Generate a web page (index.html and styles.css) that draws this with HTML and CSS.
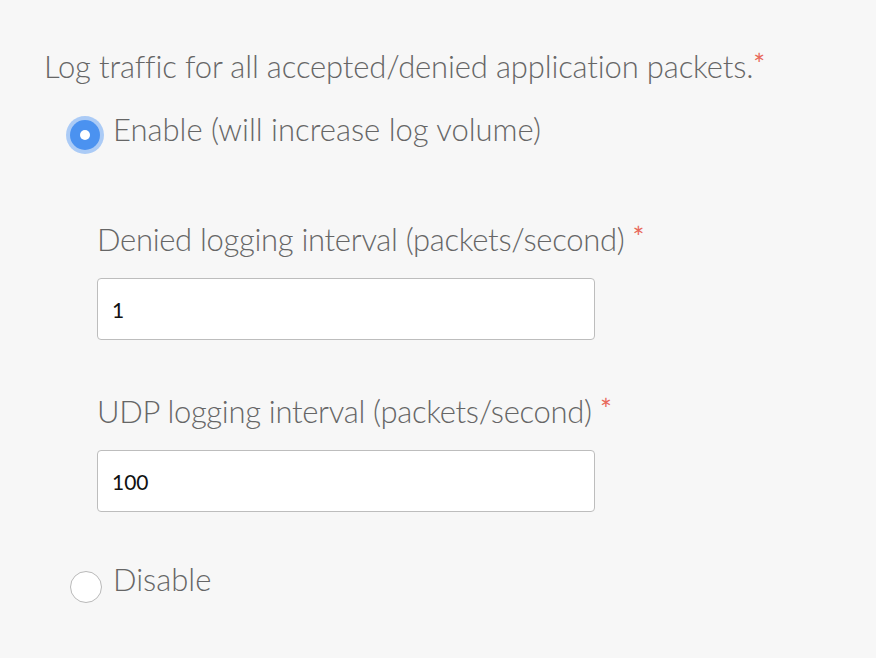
FILE: index.html
```html
<!DOCTYPE html>
<html>
<head>
<meta charset="utf-8">
<link rel="stylesheet" href="styles.css">
</head>
<body>
<div class="form">
  <div class="question">Log traffic for all accepted/denied application packets.<span class="req">*</span></div>
  <label class="option option-enable">
    <span class="radio checked"><span class="dot"></span></span>
    <span class="option-text">Enable (will increase log volume)</span>
  </label>
  <div class="sub">
    <div class="field">
      <div class="field-label">Denied logging interval (packets/second) <span class="req">*</span></div>
      <div class="input">1</div>
    </div>
    <div class="field">
      <div class="field-label">UDP logging interval (packets/second) <span class="req">*</span></div>
      <div class="input">100</div>
    </div>
  </div>
  <label class="option option-disable">
    <span class="radio"></span>
    <span class="option-text">Disable</span>
  </label>
</div>
</body>
</html>
```

FILE: styles.css
```css
html, body {
  margin: 0;
  padding: 0;
  background: #f7f7f7;
  width: 876px;
  height: 658px;
  overflow: hidden;
}
.form {
  font-family: "Lato", "Open Sans", sans-serif;
  font-weight: 300;
  color: #666;
  padding: 46px 0 0 44px;
  display: flex;
  flex-direction: column;
}
.question {
  font-size: 31px;
  line-height: 40px;
  letter-spacing: -0.15px;
}
.req {
  color: #e8685a;
  font-size: 28px;
  font-weight: 400;
  position: relative;
  top: -3px;
}
.option {
  display: flex;
  align-items: flex-start;
  gap: 12px;
  margin-left: 25px;
}
.option-enable {
  margin-top: 22px;
}
.option-text {
  font-size: 31px;
  line-height: 40px;
  letter-spacing: 0;
}
.radio {
  width: 32px;
  height: 32px;
  border-radius: 50%;
  box-sizing: border-box;
  border: 1px solid #b9b9b9;
  background: #fff;
  display: flex;
  align-items: center;
  justify-content: center;
  margin-top: 12px;
  flex: none;
}
.radio.checked {
  width: 30px;
  height: 30px;
  margin: 11px 1px 0 1px;
  border: none;
  background: #4b92f0;
  box-shadow: 0 0 0 4px #abcbf6;
}
.dot {
  width: 10px;
  height: 10px;
  border-radius: 50%;
  background: #fff;
}
.option-disable .radio {
  margin-left: 1px;
  margin-right: -1px;
}
.sub {
  margin-left: 53px;
  margin-top: 69px;
  display: flex;
  flex-direction: column;
  gap: 51px;
}
.field {
  display: flex;
  flex-direction: column;
  gap: 18px;
}
.field-label {
  font-size: 31px;
  line-height: 40px;
  letter-spacing: -0.3px;
}
.input {
  width: 498px;
  height: 62px;
  box-sizing: border-box;
  background: #fff;
  border: 1px solid #bdbdbd;
  border-radius: 4px;
  padding: 0 14px;
  display: flex;
  align-items: center;
  color: #111;
  font-size: 21px;
  font-weight: 400;
}
.option-disable {
  margin-top: 47px;
}
```
